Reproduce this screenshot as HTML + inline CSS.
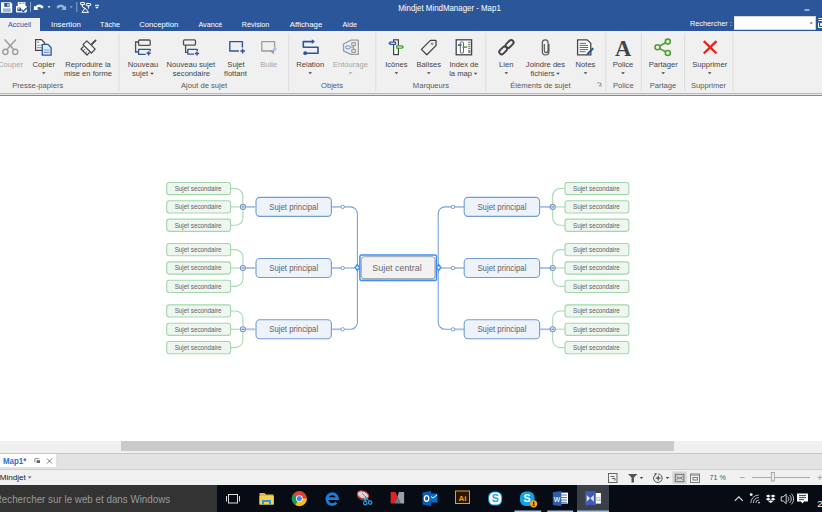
<!DOCTYPE html>
<html><head><meta charset="utf-8"><title>Mindjet MindManager - Map1</title>
<style>
html,body{margin:0;padding:0;width:822px;height:512px;overflow:hidden;background:#fff}
svg{display:block;font-family:"Liberation Sans", sans-serif}
</style></head>
<body><svg width="822" height="512" viewBox="0 0 822 512"><rect x="0" y="0" width="822" height="31" fill="#2B579A" /><rect x="0" y="18" width="40" height="13" fill="#F0F0F0" /><rect x="0" y="31" width="822" height="62" fill="#F0F0F0" /><rect x="0" y="93" width="822" height="1" fill="#B9B9B9" /><rect x="0" y="94" width="822" height="1" fill="#E4E4E4" /><rect x="0" y="95" width="822" height="1" fill="#8A8A8A" /><rect x="0" y="96" width="822" height="345" fill="#FFFFFF" /><path d="M1 2.2 H10.6 L12.2 3.8 V12.8 H1 Z" fill="#fff"/><rect x="4.2" y="3" width="5.4" height="3.8" fill="#2B579A" /><rect x="7.2" y="3.6" width="1.7" height="2.5" fill="#C9D5EA" /><rect x="3" y="8.4" width="7.8" height="3.4" fill="#9DB3D6" /><path d="M17.8 2 H25.4 V6 H17.8 Z" fill="#fff"/><path d="M19 3.2 h2.5 M22.5 3.2 h2" stroke="#2B579A" stroke-width="0.8"/><rect x="16" y="5.8" width="10.8" height="6.6" rx="1" fill="#fff"/><rect x="17.4" y="7.6" width="3.6" height="3.6" fill="#2B579A"/><rect x="18.2" y="8.2" width="1.2" height="1.2" fill="#fff"/><path d="M21.3 9.5 L23.3 11.6 L26.8 7.8" stroke="#2B579A" stroke-width="1.4" fill="none"/><rect x="30" y="2" width="1" height="10" fill="#8AA4CC" /><path d="M35 6.8 Q39 2.5 43.6 6.5 L42.3 8.8 Q39.5 5.8 37 8 L38.8 9.8 L33.8 10 L34 5.5 Z" fill="#fff"/><path d="M47.5 6.3 h3 l-1.5 1.8 z" fill="#fff"/><path d="M65 6.8 Q61 2.5 56.4 6.5 L57.7 8.8 Q60.5 5.8 63 8 L61.2 9.8 L66.2 10 L66 5.5 Z" fill="#9DB3D6"/><path d="M69.8 6.3 h3 l-1.5 1.8 z" fill="#9DB3D6"/><rect x="76.3" y="2" width="1" height="10" fill="#8AA4CC" /><g fill="none" stroke="#fff" stroke-width="1"><rect x="80.6" y="2.5" width="3.9" height="2.2" rx="0.4"/><rect x="86.3" y="3.5" width="4.3" height="2.2" rx="0.4"/><path d="M82.4 4.6 V7 L84.8 8 M88.4 5.6 V8.6"/><path d="M85 8 L82 12.4 H88.6 Z"/></g><rect x="95" y="4.8" width="4" height="1" fill="#fff" /><path d="M95 6.8 h4 l-2 2 z" fill="#fff"/><text x="449.5" y="11.2" font-size="8.3" fill="#fff" text-anchor="middle" font-weight="normal"  textLength="102.6" lengthAdjust="spacingAndGlyphs">Mindjet MindManager - Map1</text><rect x="804.5" y="9.5" width="5" height="1" fill="#fff" /><text x="19.5" y="27.3" font-size="7.2" fill="#2B579A" text-anchor="middle" font-weight="normal" >Accueil</text><text x="66" y="27.3" font-size="7.2" fill="#fff" text-anchor="middle" font-weight="normal"  textLength="29.8" lengthAdjust="spacingAndGlyphs">Insertion</text><text x="110" y="27.3" font-size="7.2" fill="#fff" text-anchor="middle" font-weight="normal" >Tâche</text><text x="158.7" y="27.3" font-size="7.2" fill="#fff" text-anchor="middle" font-weight="normal"  textLength="39.1" lengthAdjust="spacingAndGlyphs">Conception</text><text x="210.3" y="27.3" font-size="7.2" fill="#fff" text-anchor="middle" font-weight="normal" >Avancé</text><text x="255.6" y="27.3" font-size="7.2" fill="#fff" text-anchor="middle" font-weight="normal" >Révision</text><text x="306" y="27.3" font-size="7.2" fill="#fff" text-anchor="middle" font-weight="normal"  textLength="32.6" lengthAdjust="spacingAndGlyphs">Affichage</text><text x="349.7" y="27.3" font-size="7.2" fill="#fff" text-anchor="middle" font-weight="normal" >Aide</text><text x="731.8" y="25.8" font-size="7.6" fill="#fff" text-anchor="end" font-weight="normal"  textLength="41.8" lengthAdjust="spacingAndGlyphs">Rechercher :</text><rect x="734" y="16.2" width="81.7" height="13.6" fill="#fff" /><rect x="734.3" y="16.5" width="81.1" height="13" fill="none" stroke="#D8D2C8" stroke-width="0.6"/><path d="M809.8 22.6 h2.8 l-1.4 1.6 z" fill="#444"/><path d="M818.5 18.5 h3.5 M818.5 20.5 h3.5 M818.5 22.5 v5 M818.5 27.5 h3.5" stroke="#fff" stroke-width="1"/><rect x="820" y="23" width="2" height="3" fill="#E6ECF5"/><g fill="none" stroke="#9E9E9E" stroke-width="1.5"><circle cx="5.4" cy="51.8" r="2.6"/><circle cx="15.2" cy="51.8" r="2.6"/><path d="M6.8 49.6 L16 39.4 M13.8 49.6 L4.6 39.4"/></g><text x="10.5" y="67.2" font-size="7.6" fill="#A6A6A6" text-anchor="middle" font-weight="normal" >Couper</text><g><path d="M35.6 39.6 h5.8 l3.2 3.2 v7.6 h-9 z" fill="#fff" stroke="#444" stroke-width="1.2"/><rect x="37.2" y="41.5" width="2" height="1.5" fill="#999"/><path d="M37 45.3 h5 M37 47.6 h5" stroke="#9A9A9A" stroke-width="1.1"/><path d="M42.3 44.4 h5.6 l3.2 3.2 v7.6 h-8.8 z" fill="#E3EAF5" stroke="#2B579A" stroke-width="1.3"/><path d="M43.8 50 h5.6 M43.8 52.4 h5.6" stroke="#7D9BCF" stroke-width="1.2"/></g><text x="43.8" y="67.2" font-size="7.6" fill="#444" text-anchor="middle" font-weight="normal" >Copier</text><path d="M42.0 72.2 h3.6 l-1.8 2 z" fill="#444"/><g fill="none" stroke="#444" stroke-width="1.2" stroke-linejoin="round"><path d="M83 44.6 L86.8 40.8 L95.2 49.2 L91.4 53 Z" fill="#F6F6F6"/><path d="M83.6 46.4 L81 49 L87 55 L89.6 52.4"/><path d="M83 51 L84.8 49.2 M85.2 53.2 L86.8 51.6" stroke-width="0.9"/></g><path d="M92 44 L95.6 40.4" stroke="#444" stroke-width="1.8" stroke-linecap="round"/><text x="88" y="67.2" font-size="7.6" fill="#444" text-anchor="middle" font-weight="normal" >Reproduire la</text><text x="88" y="75.6" font-size="7.6" fill="#444" text-anchor="middle" font-weight="normal" >mise en forme</text><text x="37.7" y="87.7" font-size="7.6" fill="#585858" text-anchor="middle" font-weight="normal" >Presse-papiers</text><rect x="118.5" y="33" width="1" height="58" fill="#DCDCDC" /><g fill="none" stroke-width="1.3"><rect x="138.6" y="40" width="11.6" height="5.4" rx="1.2" stroke="#505050"/><path d="M138.6 42 H135.6 V52 H138.6" stroke="#505050"/><path d="M150.2 51.2 V49.3 H138.6 V54.3 H145.6" stroke="#2B579A" stroke-linejoin="round"/><path d="M148.6 51.2 v4.2 M146.5 53.3 h4.2" stroke="#2B579A" stroke-width="1.4"/></g><text x="143" y="67.2" font-size="7.6" fill="#444" text-anchor="middle" font-weight="normal" >Nouveau</text><text x="140" y="75.6" font-size="7.6" fill="#444" text-anchor="middle" font-weight="normal" >sujet</text><path d="M150.2 72.8 h3.6 l-1.8 2 z" fill="#444"/><g fill="none" stroke-width="1.3"><rect x="183.5" y="39.8" width="12" height="5.4" rx="1.2" stroke="#505050"/><path d="M185.6 45.2 V52.4 H187.8" stroke="#505050"/><path d="M197.2 51 V49.3 H187.8 V54.2 H194.2" stroke="#2B579A" stroke-linejoin="round"/><path d="M197 51.4 v4.2 M194.9 53.5 h4.2" stroke="#2B579A" stroke-width="1.4"/></g><text x="190.8" y="67.2" font-size="7.6" fill="#444" text-anchor="middle" font-weight="normal" >Nouveau sujet</text><text x="191.4" y="75.6" font-size="7.6" fill="#444" text-anchor="middle" font-weight="normal" >secondaire</text><g fill="none" stroke="#2B579A" stroke-width="1.4" stroke-linejoin="round"><path d="M238.9 51 H229.8 V41.6 H242.4 V47.4"/><path d="M242.6 48.8 v4.6 M240.4 51.1 h4.6" stroke-width="1.5"/></g><g fill="none" stroke="#9C9C9C" stroke-width="1.3" stroke-linejoin="round"><path d="M273.4 51 H261.8 V41.6 H274.6 V47.4"/></g><path d="M269.4 50.4 L274 50.4 L273.8 54.4 Z" fill="#9C9C9C"/><path d="M274.8 46.8 v4.4 M272.6 49 h4.4" stroke="#9BB5DD" stroke-width="1.2"/><text x="236" y="67.2" font-size="7.6" fill="#444" text-anchor="middle" font-weight="normal" >Sujet</text><text x="235.5" y="75.6" font-size="7.6" fill="#444" text-anchor="middle" font-weight="normal" >flottant</text><text x="268.8" y="67.2" font-size="7.6" fill="#A6A6A6" text-anchor="middle" font-weight="normal" >Bulle</text><text x="204" y="87.7" font-size="7.6" fill="#585858" text-anchor="middle" font-weight="normal" >Ajout de sujet</text><rect x="288.3" y="33" width="1" height="58" fill="#DCDCDC" /><g fill="none" stroke="#2B579A" stroke-width="1.6" stroke-linejoin="round"><path d="M312.5 41.6 H303.3 V47.3 H318 V53.2 H305"/></g><path d="M311.8 39.3 L315 41.6 L311.8 43.9 Z" fill="#2B579A"/><circle cx="305.2" cy="53.2" r="1.9" fill="#2B579A"/><text x="310.2" y="67.2" font-size="7.6" fill="#444" text-anchor="middle" font-weight="normal" >Relation</text><path d="M308.4 72.2 h3.6 l-1.8 2 z" fill="#444"/><g fill="none" stroke="#9C9C9C" stroke-width="1.3" stroke-linejoin="round"><path d="M351 40.2 H358.3 V54.4 H351 L343.5 50.8 V44 Z"/><rect x="351.8" y="42.6" width="3.6" height="3" rx="0.6"/><rect x="351.8" y="49.4" width="3.6" height="3" rx="0.6"/><path d="M350.3 47.3 H353.6 M353.6 45.6 V49.4" stroke-width="1"/></g><rect x="345.6" y="45.8" width="4.6" height="3" rx="1.5" fill="#F4F6FA" stroke="#7FA0D6" stroke-width="1.2"/><text x="350.5" y="67.2" font-size="7.6" fill="#A6A6A6" text-anchor="middle" font-weight="normal" >Entourage</text><path d="M348.7 72.2 h3.6 l-1.8 2 z" fill="#A6A6A6"/><text x="332" y="87.7" font-size="7.6" fill="#585858" text-anchor="middle" font-weight="normal" >Objets</text><rect x="375.3" y="33" width="1" height="58" fill="#DCDCDC" /><g><rect x="393.6" y="39.8" width="4.8" height="14.8" fill="#fff" stroke="#444" stroke-width="1.2"/><path d="M388.3 43.2 L390 41.5 H396.2 V44.9 H390 Z" fill="#2B579A"/><path d="M396 45.3 H402.3 L404.1 47 L402.3 48.7 H396 Z" fill="#4EA02E"/><rect x="390.4" y="42.7" width="4.6" height="1" fill="#fff"/><rect x="397.2" y="46.5" width="4.6" height="1" fill="#fff"/></g><text x="396.4" y="67.2" font-size="7.6" fill="#444" text-anchor="middle" font-weight="normal" >Icônes</text><path d="M394.59999999999997 72.2 h3.6 l-1.8 2 z" fill="#444"/><g fill="none" stroke="#444" stroke-width="1.3" stroke-linejoin="round"><path d="M421.4 49.4 L430.4 40.4 H436 V45.6 L426.8 54.8 Z"/></g><circle cx="432.1" cy="43.9" r="1.4" fill="#999"/><text x="428.8" y="67.2" font-size="7.6" fill="#444" text-anchor="middle" font-weight="normal" >Balises</text><path d="M427.0 72.2 h3.6 l-1.8 2 z" fill="#444"/><g><rect x="456.2" y="39.8" width="15.4" height="15" fill="#fff" stroke="#444" stroke-width="1.3"/><rect x="460.3" y="42" width="3.2" height="11" rx="0.8" fill="none" stroke="#555" stroke-width="0.9"/><rect x="457.8" y="44.3" width="3.8" height="1.5" fill="#2B579A"/><rect x="462.5" y="46.4" width="4.8" height="1.5" fill="#4EA02E"/><path d="M468.2 42.3 h2.3 M468.2 44.3 h2.3 M468.2 46.3 h2.3 M468.2 48.3 h2.3" stroke="#555" stroke-width="0.9"/><rect x="468.2" y="49.8" width="2.3" height="3.4" fill="#888"/></g><text x="464" y="67.2" font-size="7.6" fill="#444" text-anchor="middle" font-weight="normal" >Index de</text><text x="460.6" y="75.6" font-size="7.6" fill="#444" text-anchor="middle" font-weight="normal" >la map</text><path d="M473.8 72.8 h3.6 l-1.8 2 z" fill="#444"/><text x="431" y="87.7" font-size="7.6" fill="#585858" text-anchor="middle" font-weight="normal" >Marqueurs</text><rect x="485.3" y="33" width="1" height="58" fill="#DCDCDC" /><g fill="none" stroke="#444" stroke-width="1.9"><rect x="-4.6" y="-2.4" width="9.2" height="4.8" rx="2.4" transform="translate(503.2 50.4) rotate(-45)"/><rect x="-4.6" y="-2.4" width="9.2" height="4.8" rx="2.4" transform="translate(509.6 44) rotate(-45)"/></g><text x="506.3" y="67.2" font-size="7.6" fill="#444" text-anchor="middle" font-weight="normal" >Lien</text><path d="M504.5 72.2 h3.6 l-1.8 2 z" fill="#444"/><path d="M548.9 44 V51.2 Q548.9 55 545.6 55 Q542.3 55 542.3 51.2 V43.2 Q542.3 39.9 545.3 39.9 Q548.1 39.9 548.1 43.2 V50.6 Q548.1 52.6 545.8 52.6 Q544.3 52.6 544.3 50.6 V44" fill="none" stroke="#555" stroke-width="1.2"/><text x="545.5" y="67.2" font-size="7.6" fill="#444" text-anchor="middle" font-weight="normal" >Joindre des</text><text x="542.5" y="75.6" font-size="7.6" fill="#444" text-anchor="middle" font-weight="normal" >fichiers</text><path d="M556.2 72.8 h3.6 l-1.8 2 z" fill="#444"/><g><path d="M577.6 39.8 h9.6 l3.6 3.6 v11.4 h-13.2 z" fill="#fff" stroke="#444" stroke-width="1.3"/><path d="M579.6 43.3 h6.5 M579.6 45.4 h8.5 M579.6 47.5 h8.5 M579.6 49.6 h8.5 M579.6 51.7 h6" stroke="#555" stroke-width="0.9"/><path d="M586.5 55.2 L587 53 L592.5 47.5 L594 49 L588.5 54.5 Z" fill="#2B579A"/></g><text x="585.5" y="67.2" font-size="7.6" fill="#444" text-anchor="middle" font-weight="normal" >Notes</text><path d="M583.7 72.2 h3.6 l-1.8 2 z" fill="#444"/><text x="540.4" y="87.7" font-size="7.6" fill="#585858" text-anchor="middle" font-weight="normal" >Éléments de sujet</text><path d="M597 83 h4 v4" fill="none" stroke="#888" stroke-width="0.8"/><path d="M598.5 86.5 l2.5-2.5" stroke="#888" stroke-width="0.8"/><rect x="605.3" y="33" width="1" height="58" fill="#DCDCDC" /><text x="623" y="55.5" font-family="Liberation Serif" font-size="22.5" font-weight="bold" fill="#444" text-anchor="middle">A</text><text x="623" y="67.2" font-size="7.6" fill="#444" text-anchor="middle" font-weight="normal" >Police</text><path d="M621.2 72.2 h3.6 l-1.8 2 z" fill="#444"/><text x="623.3" y="87.7" font-size="7.6" fill="#585858" text-anchor="middle" font-weight="normal" >Police</text><rect x="640.8" y="33" width="1" height="58" fill="#DCDCDC" /><g fill="none" stroke="#4EA02E" stroke-width="1.6"><circle cx="657.5" cy="47.3" r="2.5"/><circle cx="667.8" cy="41.6" r="2.5"/><circle cx="667.8" cy="53" r="2.5"/><path d="M659.8 46 L665.5 42.8 M659.8 48.6 L665.5 51.8"/></g><text x="663.2" y="67.2" font-size="7.6" fill="#444" text-anchor="middle" font-weight="normal" >Partager</text><path d="M661.4000000000001 72.2 h3.6 l-1.8 2 z" fill="#444"/><text x="663" y="87.7" font-size="7.6" fill="#585858" text-anchor="middle" font-weight="normal" >Partage</text><rect x="684.2" y="33" width="1" height="58" fill="#DCDCDC" /><path d="M703.8 41.2 L716.5 53.5 M716.5 41.2 L703.8 53.5" stroke="#E8231A" stroke-width="2.4"/><text x="709.7" y="67.2" font-size="7.6" fill="#444" text-anchor="middle" font-weight="normal" >Supprimer</text><path d="M707.9000000000001 72.2 h3.6 l-1.8 2 z" fill="#444"/><text x="708.5" y="87.7" font-size="7.6" fill="#585858" text-anchor="middle" font-weight="normal" >Supprimer</text><rect x="732.4" y="33" width="1" height="58" fill="#DCDCDC" /><path d="M331.6 206.9 H342.7" stroke="#A6C3E8" stroke-width="1.9" fill="none"/><path d="M342.7 206.9 H350.4 A7 7 0 0 1 357.4 213.9 V267.6" stroke="#7AA3D8" stroke-width="1.1" fill="none"/><circle cx="342.7" cy="206.9" r="1.7" fill="#fff" stroke="#7AA3D8" stroke-width="1"/><rect x="256.0" y="197.4" width="75.4" height="19" rx="3.8" fill="#EEF3FB" stroke="#729DD2" stroke-width="1.1"/><text x="293.7" y="209.70000000000002" font-size="8.3" fill="#5E6266" text-anchor="middle" textLength="49" lengthAdjust="spacingAndGlyphs">Sujet principal</text><path d="M230.8 188.55 H235.4 A7.5 7.5 0 0 1 242.9 196.05 V217.75 A7.5 7.5 0 0 1 235.4 225.25 H230.8" stroke="#A9D9B1" stroke-width="1.1" fill="none"/><path d="M230.8 206.9 H242.9" stroke="#BFE3C5" stroke-width="1.5" fill="none"/><path d="M242.9 206.9 H255.8" stroke="#A6C3E8" stroke-width="1.9"/><circle cx="242.9" cy="206.9" r="2.5" fill="#F4F4F4" stroke="#6F98D0" stroke-width="1.1"/><rect x="241.6" y="206.25" width="2.6" height="1.3" fill="#8A8A8A"/><rect x="166.7" y="182.45000000000002" width="63.9" height="12.2" rx="2.5" fill="#EEF6F0" stroke="#A3D6AB" stroke-width="1.1"/><text x="198.1" y="190.85000000000002" font-size="6.3" fill="#5E6266" text-anchor="middle">Sujet secondaire</text><rect x="166.7" y="200.8" width="63.9" height="12.2" rx="2.5" fill="#EEF6F0" stroke="#A3D6AB" stroke-width="1.1"/><text x="198.1" y="209.20000000000002" font-size="6.3" fill="#5E6266" text-anchor="middle">Sujet secondaire</text><rect x="166.7" y="219.15" width="63.9" height="12.2" rx="2.5" fill="#EEF6F0" stroke="#A3D6AB" stroke-width="1.1"/><text x="198.1" y="227.55" font-size="6.3" fill="#5E6266" text-anchor="middle">Sujet secondaire</text><path d="M331.6 268 H342.7" stroke="#A6C3E8" stroke-width="1.9" fill="none"/><path d="M342.7 268 H357.4" stroke="#7AA3D8" stroke-width="1.1" fill="none"/><circle cx="342.7" cy="268" r="1.7" fill="#fff" stroke="#7AA3D8" stroke-width="1"/><rect x="256.0" y="258.5" width="75.4" height="19" rx="3.8" fill="#EEF3FB" stroke="#729DD2" stroke-width="1.1"/><text x="293.7" y="270.8" font-size="8.3" fill="#5E6266" text-anchor="middle" textLength="49" lengthAdjust="spacingAndGlyphs">Sujet principal</text><path d="M230.8 249.65 H235.4 A7.5 7.5 0 0 1 242.9 257.15 V278.85 A7.5 7.5 0 0 1 235.4 286.35 H230.8" stroke="#A9D9B1" stroke-width="1.1" fill="none"/><path d="M230.8 268 H242.9" stroke="#BFE3C5" stroke-width="1.5" fill="none"/><path d="M242.9 268 H255.8" stroke="#A6C3E8" stroke-width="1.9"/><circle cx="242.9" cy="268" r="2.5" fill="#F4F4F4" stroke="#6F98D0" stroke-width="1.1"/><rect x="241.6" y="267.35" width="2.6" height="1.3" fill="#8A8A8A"/><rect x="166.7" y="243.55" width="63.9" height="12.2" rx="2.5" fill="#EEF6F0" stroke="#A3D6AB" stroke-width="1.1"/><text x="198.1" y="251.95000000000002" font-size="6.3" fill="#5E6266" text-anchor="middle">Sujet secondaire</text><rect x="166.7" y="261.9" width="63.9" height="12.2" rx="2.5" fill="#EEF6F0" stroke="#A3D6AB" stroke-width="1.1"/><text x="198.1" y="270.3" font-size="6.3" fill="#5E6266" text-anchor="middle">Sujet secondaire</text><rect x="166.7" y="280.25" width="63.9" height="12.2" rx="2.5" fill="#EEF6F0" stroke="#A3D6AB" stroke-width="1.1"/><text x="198.1" y="288.65000000000003" font-size="6.3" fill="#5E6266" text-anchor="middle">Sujet secondaire</text><path d="M331.6 329.3 H342.7" stroke="#A6C3E8" stroke-width="1.9" fill="none"/><path d="M342.7 329.3 H350.4 A7 7 0 0 0 357.4 322.3 V267.6" stroke="#7AA3D8" stroke-width="1.1" fill="none"/><circle cx="342.7" cy="329.3" r="1.7" fill="#fff" stroke="#7AA3D8" stroke-width="1"/><rect x="256.0" y="319.8" width="75.4" height="19" rx="3.8" fill="#EEF3FB" stroke="#729DD2" stroke-width="1.1"/><text x="293.7" y="332.1" font-size="8.3" fill="#5E6266" text-anchor="middle" textLength="49" lengthAdjust="spacingAndGlyphs">Sujet principal</text><path d="M230.8 310.95 H235.4 A7.5 7.5 0 0 1 242.9 318.45 V340.15000000000003 A7.5 7.5 0 0 1 235.4 347.65000000000003 H230.8" stroke="#A9D9B1" stroke-width="1.1" fill="none"/><path d="M230.8 329.3 H242.9" stroke="#BFE3C5" stroke-width="1.5" fill="none"/><path d="M242.9 329.3 H255.8" stroke="#A6C3E8" stroke-width="1.9"/><circle cx="242.9" cy="329.3" r="2.5" fill="#F4F4F4" stroke="#6F98D0" stroke-width="1.1"/><rect x="241.6" y="328.65000000000003" width="2.6" height="1.3" fill="#8A8A8A"/><rect x="166.7" y="304.84999999999997" width="63.9" height="12.2" rx="2.5" fill="#EEF6F0" stroke="#A3D6AB" stroke-width="1.1"/><text x="198.1" y="313.25" font-size="6.3" fill="#5E6266" text-anchor="middle">Sujet secondaire</text><rect x="166.7" y="323.2" width="63.9" height="12.2" rx="2.5" fill="#EEF6F0" stroke="#A3D6AB" stroke-width="1.1"/><text x="198.1" y="331.6" font-size="6.3" fill="#5E6266" text-anchor="middle">Sujet secondaire</text><rect x="166.7" y="341.55" width="63.9" height="12.2" rx="2.5" fill="#EEF6F0" stroke="#A3D6AB" stroke-width="1.1"/><text x="198.1" y="349.95000000000005" font-size="6.3" fill="#5E6266" text-anchor="middle">Sujet secondaire</text><path d="M464.0 206.9 H452.9" stroke="#A6C3E8" stroke-width="1.9" fill="none"/><path d="M452.9 206.9 H445.2 A7 7 0 0 0 438.2 213.9 V267.6" stroke="#7AA3D8" stroke-width="1.1" fill="none"/><circle cx="452.9" cy="206.9" r="1.7" fill="#fff" stroke="#7AA3D8" stroke-width="1"/><rect x="464.2" y="197.4" width="75.4" height="19" rx="3.8" fill="#EEF3FB" stroke="#729DD2" stroke-width="1.1"/><text x="501.9" y="209.70000000000002" font-size="8.3" fill="#5E6266" text-anchor="middle" textLength="49" lengthAdjust="spacingAndGlyphs">Sujet principal</text><path d="M564.8 188.55 H560.2 A7.5 7.5 0 0 0 552.7 196.05 V217.75 A7.5 7.5 0 0 0 560.2 225.25 H564.8" stroke="#A9D9B1" stroke-width="1.1" fill="none"/><path d="M564.8 206.9 H552.7" stroke="#BFE3C5" stroke-width="1.5" fill="none"/><path d="M552.7 206.9 H539.8" stroke="#A6C3E8" stroke-width="1.9"/><circle cx="552.7" cy="206.9" r="2.5" fill="#F4F4F4" stroke="#6F98D0" stroke-width="1.1"/><rect x="551.4000000000001" y="206.25" width="2.6" height="1.3" fill="#8A8A8A"/><rect x="565.0" y="182.45000000000002" width="63.9" height="12.2" rx="2.5" fill="#EEF6F0" stroke="#A3D6AB" stroke-width="1.1"/><text x="596.4" y="190.85000000000002" font-size="6.3" fill="#5E6266" text-anchor="middle">Sujet secondaire</text><rect x="565.0" y="200.8" width="63.9" height="12.2" rx="2.5" fill="#EEF6F0" stroke="#A3D6AB" stroke-width="1.1"/><text x="596.4" y="209.20000000000002" font-size="6.3" fill="#5E6266" text-anchor="middle">Sujet secondaire</text><rect x="565.0" y="219.15" width="63.9" height="12.2" rx="2.5" fill="#EEF6F0" stroke="#A3D6AB" stroke-width="1.1"/><text x="596.4" y="227.55" font-size="6.3" fill="#5E6266" text-anchor="middle">Sujet secondaire</text><path d="M464.0 268 H452.9" stroke="#A6C3E8" stroke-width="1.9" fill="none"/><path d="M452.9 268 H438.2" stroke="#7AA3D8" stroke-width="1.1" fill="none"/><circle cx="452.9" cy="268" r="1.7" fill="#fff" stroke="#7AA3D8" stroke-width="1"/><rect x="464.2" y="258.5" width="75.4" height="19" rx="3.8" fill="#EEF3FB" stroke="#729DD2" stroke-width="1.1"/><text x="501.9" y="270.8" font-size="8.3" fill="#5E6266" text-anchor="middle" textLength="49" lengthAdjust="spacingAndGlyphs">Sujet principal</text><path d="M564.8 249.65 H560.2 A7.5 7.5 0 0 0 552.7 257.15 V278.85 A7.5 7.5 0 0 0 560.2 286.35 H564.8" stroke="#A9D9B1" stroke-width="1.1" fill="none"/><path d="M564.8 268 H552.7" stroke="#BFE3C5" stroke-width="1.5" fill="none"/><path d="M552.7 268 H539.8" stroke="#A6C3E8" stroke-width="1.9"/><circle cx="552.7" cy="268" r="2.5" fill="#F4F4F4" stroke="#6F98D0" stroke-width="1.1"/><rect x="551.4000000000001" y="267.35" width="2.6" height="1.3" fill="#8A8A8A"/><rect x="565.0" y="243.55" width="63.9" height="12.2" rx="2.5" fill="#EEF6F0" stroke="#A3D6AB" stroke-width="1.1"/><text x="596.4" y="251.95000000000002" font-size="6.3" fill="#5E6266" text-anchor="middle">Sujet secondaire</text><rect x="565.0" y="261.9" width="63.9" height="12.2" rx="2.5" fill="#EEF6F0" stroke="#A3D6AB" stroke-width="1.1"/><text x="596.4" y="270.3" font-size="6.3" fill="#5E6266" text-anchor="middle">Sujet secondaire</text><rect x="565.0" y="280.25" width="63.9" height="12.2" rx="2.5" fill="#EEF6F0" stroke="#A3D6AB" stroke-width="1.1"/><text x="596.4" y="288.65000000000003" font-size="6.3" fill="#5E6266" text-anchor="middle">Sujet secondaire</text><path d="M464.0 329.3 H452.9" stroke="#A6C3E8" stroke-width="1.9" fill="none"/><path d="M452.9 329.3 H445.2 A7 7 0 0 1 438.2 322.3 V267.6" stroke="#7AA3D8" stroke-width="1.1" fill="none"/><circle cx="452.9" cy="329.3" r="1.7" fill="#fff" stroke="#7AA3D8" stroke-width="1"/><rect x="464.2" y="319.8" width="75.4" height="19" rx="3.8" fill="#EEF3FB" stroke="#729DD2" stroke-width="1.1"/><text x="501.9" y="332.1" font-size="8.3" fill="#5E6266" text-anchor="middle" textLength="49" lengthAdjust="spacingAndGlyphs">Sujet principal</text><path d="M564.8 310.95 H560.2 A7.5 7.5 0 0 0 552.7 318.45 V340.15000000000003 A7.5 7.5 0 0 0 560.2 347.65000000000003 H564.8" stroke="#A9D9B1" stroke-width="1.1" fill="none"/><path d="M564.8 329.3 H552.7" stroke="#BFE3C5" stroke-width="1.5" fill="none"/><path d="M552.7 329.3 H539.8" stroke="#A6C3E8" stroke-width="1.9"/><circle cx="552.7" cy="329.3" r="2.5" fill="#F4F4F4" stroke="#6F98D0" stroke-width="1.1"/><rect x="551.4000000000001" y="328.65000000000003" width="2.6" height="1.3" fill="#8A8A8A"/><rect x="565.0" y="304.84999999999997" width="63.9" height="12.2" rx="2.5" fill="#EEF6F0" stroke="#A3D6AB" stroke-width="1.1"/><text x="596.4" y="313.25" font-size="6.3" fill="#5E6266" text-anchor="middle">Sujet secondaire</text><rect x="565.0" y="323.2" width="63.9" height="12.2" rx="2.5" fill="#EEF6F0" stroke="#A3D6AB" stroke-width="1.1"/><text x="596.4" y="331.6" font-size="6.3" fill="#5E6266" text-anchor="middle">Sujet secondaire</text><rect x="565.0" y="341.55" width="63.9" height="12.2" rx="2.5" fill="#EEF6F0" stroke="#A3D6AB" stroke-width="1.1"/><text x="596.4" y="349.95000000000005" font-size="6.3" fill="#5E6266" text-anchor="middle">Sujet secondaire</text><rect x="359.9" y="254.9" width="76.6" height="25.5" rx="1.5" fill="none" stroke="#3D8EF5" stroke-width="1.5"/><rect x="361.3" y="256.7" width="73.8" height="22.2" rx="3" fill="#F2F2F2" stroke="#A2A2A2" stroke-width="1"/><path d="M362 279 H434.5" stroke="#8C8C8C" stroke-width="0.8"/><path d="M435.2 259.5 V277.5" stroke="#9A9A9A" stroke-width="0.6"/><text x="397" y="271.1" font-size="8.9" fill="#6A6A6A" text-anchor="middle" font-weight="normal" >Sujet central</text><path d="M354.1 267.6 L357.3 263.6 L360.5 267.6 L357.3 271.6 Z" fill="#3D8EF5"/><path d="M355.7 267.6 h3.2 M357.3 266 v3.2" stroke="#fff" stroke-width="0.8"/><path d="M435.5 267.6 L438.7 263.6 L441.9 267.6 L438.7 271.6 Z" fill="#3D8EF5"/><path d="M437.09999999999997 267.6 h3.2 M438.7 266 v3.2" stroke="#fff" stroke-width="0.8"/><rect x="0" y="441" width="822" height="12" fill="#F0F0F0" /><rect x="121" y="441" width="553" height="10" fill="#CACACA" /><rect x="0" y="453" width="822" height="1" fill="#C6C6C6" /><rect x="0" y="454" width="822" height="15" fill="#E3E3E3" /><rect x="0" y="469" width="822" height="1" fill="#CFCFCF" /><rect x="0" y="470" width="822" height="15" fill="#F0F0F0" /><rect x="0" y="454" width="56.5" height="13" fill="#FFFFFF" /><rect x="56.5" y="454" width="1" height="13" fill="#D8D8D8" /><text x="3" y="463.8" font-size="8.4" fill="#2A70C8" text-anchor="start" font-weight="bold"  textLength="23.2" lengthAdjust="spacingAndGlyphs">Map1*</text><path d="M34.8 462.5 V458.6 H39.2" fill="none" stroke="#888" stroke-width="0.9"/><rect x="36.6" y="460.2" width="3.4" height="2.8" fill="#666"/><path d="M47 458.6 L52 463.6 M52 458.6 L47 463.6" stroke="#555" stroke-width="0.8"/><text x="-0.3" y="479.7" font-size="7.8" fill="#222" text-anchor="start" font-weight="normal"  textLength="26" lengthAdjust="spacingAndGlyphs">Mindjet</text><path d="M27.9 476.5 h3.6 l-1.8 2 z" fill="#555"/><g fill="none" stroke="#666" stroke-width="1"><rect x="608.5" y="473.5" width="8.5" height="9"/><path d="M610.5 476.5 h4 M612 478.5 h3 v2"/></g><path d="M628 474 h9.5 l-3.5 3.5 v5 h-2.5 v-5 z" fill="#555"/><path d="M639.7 477 h3.6 l-1.8 2 z" fill="#444"/><g fill="none" stroke="#555" stroke-width="1"><path d="M655.5 474.6 A4.3 4.3 0 1 0 658.2 473.9"/><path d="M655.8 478.2 h4.8 M658.2 475.8 v4.8" stroke-width="1.3"/></g><path d="M654.3 473 l2.8 0.6 l-1.8 2.2 z" fill="#555"/><path d="M665.7 477 h3.6 l-1.8 2 z" fill="#444"/><rect x="672.3" y="471.5" width="14.4" height="12.5" fill="#D6D6D6" /><g fill="none" stroke="#666" stroke-width="0.9"><rect x="675.3" y="474.3" width="8.6" height="7.4"/><path d="M676.5 476.5 l2 1.5 l-2 1.5 M682.7 476.5 l-2 1.5 l2 1.5 M678.5 478 h2.2"/></g><g fill="none" stroke="#707070" stroke-width="0.9"><rect x="690.5" y="474" width="9" height="8.5"/><rect x="693" y="477.5" width="4.5" height="2.5"/></g><rect x="691" y="474.5" width="8" height="1.2" fill="#999" /><text x="709.6" y="479.9" font-size="7.8" fill="#555" text-anchor="start" font-weight="normal"  textLength="16.2" lengthAdjust="spacingAndGlyphs">71 %</text><rect x="740" y="477" width="4.5" height="0.8" fill="#999" /><rect x="752" y="477" width="58" height="1" fill="#AAA" /><rect x="771.3" y="472.5" width="3" height="8.5" fill="#F0F0F0" stroke="#999" stroke-width="0.8"/><path d="M817.5 477.4 h5 M820 475 v5" stroke="#999" stroke-width="0.8"/><rect x="0" y="485" width="822" height="27" fill="#070B14" /><rect x="0" y="485" width="217" height="27" fill="#333333" /><text x="-5.3" y="502.6" font-size="10.1" fill="#9A9A9A" text-anchor="start" font-weight="normal"  textLength="175.5" lengthAdjust="spacingAndGlyphs">Rechercher sur le web et dans Windows</text><g fill="none" stroke="#ddd" stroke-width="1"><rect x="228.5" y="494.5" width="9" height="8.5"/><path d="M226.5 496 v5.5 M239.5 496 v5.5"/></g><path d="M259.5 493 h5 l1.5 1.5 h7.5 v10 h-14 z" fill="#E8B53A"/><rect x="259.5" y="496" width="14.3" height="8.5" fill="#F6CF57"/><path d="M263 504.5 v-3.5 h7 v3.5" fill="none" stroke="#2B9BE0" stroke-width="2"/><circle cx="299.3" cy="498.6" r="7.5" fill="#DB4437"/><path d="M299.3 498.6 L292.8 494.85 A7.5 7.5 0 0 0 295.55 505.1 Z" fill="#0F9D58"/><path d="M299.3 498.6 L295.55 505.1 A7.5 7.5 0 0 0 306.8 498.6 Z" fill="#F4C20D"/><circle cx="299.3" cy="498.6" r="3.4" fill="#fff"/><circle cx="299.3" cy="498.6" r="2.6" fill="#4285F4"/><path d="M328 498.6 H337.6 A5.4 5.4 0 1 0 336.4 502.6" fill="none" stroke="#1E7BD6" stroke-width="2.8"/><ellipse cx="362.5" cy="497" rx="5.8" ry="3.6" fill="#555" opacity="0.6" transform="rotate(20 362.5 497)"/><ellipse cx="363" cy="495" rx="5.8" ry="3.8" fill="#D8D8D8" stroke="#D83A3A" stroke-width="1.1" transform="rotate(20 363 495)"/><path d="M362 493 L368 500 M365.5 496 L366 502" stroke="#888" stroke-width="1"/><circle cx="365.3" cy="503.2" r="1.7" fill="none" stroke="#2E9BE0" stroke-width="1.2"/><circle cx="370.2" cy="502.6" r="1.7" fill="none" stroke="#2E9BE0" stroke-width="1.2"/><path d="M363.5 497.5 L365.5 501.5 M366 497.5 L369 501" stroke="#2E9BE0" stroke-width="1.1"/><path d="M390.7 492 H395.3 L397.5 496.5 L394.2 503.6 H390.7 Z" fill="#E52025"/><path d="M399 492 H404.1 V503.6 H400.5 L397.5 496.5 Z" fill="#98A1A8"/><path d="M397.5 496.5 L394.2 503.6 H400.5 Z" fill="#6C7880"/><rect x="428" y="493.5" width="9.5" height="9" fill="#0072C6"/><path d="M429 495 l4 3 l4 -3" stroke="#fff" fill="none" stroke-width="1"/><path d="M422.5 492.5 L431 491 V506 L422.5 504.5 Z" fill="#0A5FB4"/><ellipse cx="426.6" cy="498.5" rx="2.2" ry="2.8" fill="none" stroke="#fff" stroke-width="1.3"/><rect x="455.5" y="491" width="14" height="12.5" fill="#2B1600" stroke="#F29A1F" stroke-width="1"/><text x="462.5" y="500.8" font-size="8" fill="#F29A1F" text-anchor="middle" font-weight="bold">Ai</text><rect x="488.2" y="491.6" width="14" height="14" rx="5.5" fill="#1AA3E8"/><rect x="489.2" y="492.6" width="12" height="12" rx="4.8" fill="#fff"/><text x="495.2" y="502.4" font-size="10.5" fill="#1AA3E8" text-anchor="middle" font-weight="bold">S</text><rect x="520" y="491.5" width="14.5" height="14.5" rx="5.8" fill="#0FA5EC"/><text x="527" y="502.3" font-size="10.5" fill="#fff" text-anchor="middle" font-weight="bold">S</text><circle cx="533.6" cy="503.8" r="3.6" fill="#F5A623"/><rect x="533.1" y="501.6" width="1.1" height="2.8" fill="#111"/><rect x="532.4" y="504.8" width="2.5" height="0.9" fill="#111"/><rect x="559" y="492.6" width="9" height="11" fill="#fff"/><path d="M561 495 h6 M561 497.5 h6 M561 500 h6 M561 502.3 h6" stroke="#3B63AC" stroke-width="0.9"/><path d="M552.8 492.3 L561.3 490.9 V506.3 L552.8 504.9 Z" fill="#2E5CA8"/><text x="557" y="501.5" font-size="6.8" fill="#DDE4F0" text-anchor="middle" font-weight="bold">W</text><rect x="577" y="485" width="32" height="27" fill="#3B3F48" /><rect x="585.2" y="491.2" width="10.5" height="14" fill="#3E5BB8"/><rect x="595.7" y="493" width="5.2" height="10.6" fill="#fff"/><path d="M586.7 495 L590 498.2 L586.7 501.7 Z M590.3 498.2 L593.8 495 V501.7 Z" fill="#E6E6E6"/><text x="598.3" y="501" font-size="6" fill="#777" text-anchor="middle">G</text><rect x="514.4" y="510.5" width="26.800000000000068" height="1.5" fill="#99C4EE" /><rect x="547.3" y="510.5" width="25.800000000000068" height="1.5" fill="#99C4EE" /><rect x="577" y="510.5" width="32" height="1.5" fill="#99C4EE" /><path d="M734.8 500.8 L738.8 496.8 L742.8 500.8" fill="none" stroke="#E0E0E0" stroke-width="1.1"/><g fill="none" stroke="#C8C8C8" stroke-width="0.9"><path d="M750.8 503 A8 8 0 0 1 758.8 495"/><path d="M753.3 503 A5.5 5.5 0 0 1 758.8 497.5"/><path d="M755.8 503 A3 3 0 0 1 758.8 500"/></g><circle cx="751.2" cy="494.6" r="1.4" fill="#fff"/><circle cx="759" cy="502.6" r="0.9" fill="#ddd"/><g fill="#F2F2F2"><path d="M765.8 496 l2.5 -1.6 l2.4 1.6 l-2.4 1.6 z"/><path d="M770.6 496 l2.4 -1.6 l2.5 1.6 l-2.5 1.6 z"/><path d="M765.8 499.2 l2.5 -1.6 l2.4 1.6 l-2.4 1.6 z"/><path d="M770.6 499.2 l2.4 -1.6 l2.5 1.6 l-2.5 1.6 z"/><path d="M768.2 501.6 l2.5 -1.4 l2.5 1.4 l-2.5 1.5 z"/></g><path d="M781.2 496.8 h2 l3 -2.6 v9.4 l-3 -2.6 h-2 z" fill="none" stroke="#E6E6E6" stroke-width="0.9"/><path d="M787.8 496.5 a3.5 3.5 0 0 1 0 5 M789.6 495 a5.6 5.6 0 0 1 0 8 M791.4 493.6 a7.6 7.6 0 0 1 0 10.8" fill="none" stroke="#E6E6E6" stroke-width="0.8"/><path d="M797 493.4 h11 v8.2 h-4 l-1.5 1.8 l-1.5 -1.8 h-4 z" fill="#fff"/><path d="M799 495.6 h7 M799 497.6 h7 M799 499.6 h5" stroke="#0A0E16" stroke-width="0.8"/><text x="817.3" y="507" font-size="9.6" fill="#fff" text-anchor="start" font-weight="normal" >2</text></svg></body></html>
